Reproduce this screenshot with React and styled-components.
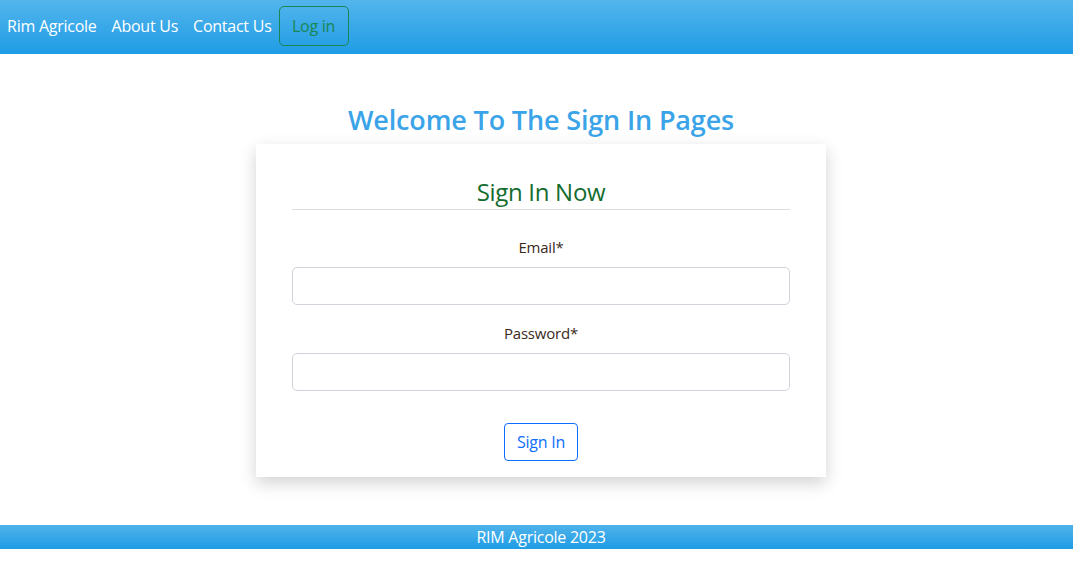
import React from "react";
import styled, { createGlobalStyle } from "styled-components";

const Global = createGlobalStyle`
  * { box-sizing: border-box; }
  body {
    margin: 0;
    font-family: "Open Sans", "Noto Sans", sans-serif;
    background: #fff;
    color: #212529;
  }
`;

const Page = styled.div`
  display: flex;
  flex-direction: column;
  min-height: 563px;
`;

const NavBar = styled.nav`
  height: 54px;
  display: flex;
  align-items: center;
  padding: 0 0 2px 7px;
  background: linear-gradient(180deg, #53b5ec 0%, #1f9ce5 100%);
`;

const NavLink = styled.a`
  color: #fff;
  font-size: 16px;
  text-decoration: none;
  margin-right: 15px;
  letter-spacing: -0.25px;
`;

const LoginButton = styled.button`
  height: 40px;
  width: 70px;
  padding: 0;
  margin-left: -8px;
  border: 1px solid #198754;
  border-radius: 5px;
  background: transparent;
  color: #198754;
  font-family: inherit;
  font-size: 16px;
  letter-spacing: -0.25px;
`;

const Main = styled.main`
  display: flex;
  flex-direction: column;
  align-items: center;
  padding: 45px 0 0 9px;
  height: 471px;
`;

const Title = styled.h1`
  margin: 0;
  font-size: 27px;
  font-weight: 600;
  color: #3ba4e8;
  line-height: 42px;
  letter-spacing: -0.15px;
`;

const Card = styled.div`
  margin-top: 3px;
  width: 570px;
  padding: 20px 36px 16px;
  background: #fff;
  box-shadow: 0 6px 16px rgba(0, 0, 0, 0.18);
  display: flex;
  flex-direction: column;
  align-items: stretch;
`;

const CardTitle = styled.h2`
  margin: 12px 0 0;
  font-size: 24px;
  font-weight: 400;
  color: #146c2e;
  text-align: center;
  line-height: 32px;
  letter-spacing: -0.3px;
  padding-bottom: 1px;
  border-bottom: 1px solid #dcdde2;
`;

const Field = styled.div`
  display: flex;
  flex-direction: column;
  align-items: stretch;
  margin-top: ${(p) => p.$top}px;
`;

const Label = styled.label`
  text-align: center;
  font-size: 15px;
  color: #3a2a1c;
  line-height: 22px;
  letter-spacing: -0.2px;
`;

const Input = styled.input`
  margin-top: 9px;
  height: 38px;
  border: 1px solid #ced4da;
  border-radius: 5px;
  padding: 6px 12px;
  font-size: 15px;
  font-family: inherit;
  outline: none;
`;

const Actions = styled.div`
  display: flex;
  justify-content: center;
  margin-top: 32px;
`;

const SignInButton = styled.button`
  width: 74px;
  height: 38px;
  padding: 0;
  border: 1px solid #0d6efd;
  border-radius: 4px;
  background: #fff;
  color: #0d6efd;
  font-family: inherit;
  font-size: 16px;
  letter-spacing: -0.25px;
`;

const Footer = styled.footer`
  height: 24px;
  display: flex;
  align-items: center;
  justify-content: center;
  padding-left: 9px;
  color: #fff;
  font-size: 16px;
  letter-spacing: -0.25px;
  background: linear-gradient(180deg, #4fb3ea 0%, #1f9ce5 100%);
`;

export default function App() {
  return (
    <Page>
      <Global />
      <NavBar>
        <NavLink href="#">Rim Agricole</NavLink>
        <NavLink href="#">About Us</NavLink>
        <NavLink href="#">Contact Us</NavLink>
        <LoginButton>Log in</LoginButton>
      </NavBar>
      <Main>
        <Title>Welcome To The Sign In Pages</Title>
        <Card>
          <CardTitle>Sign In Now</CardTitle>
          <Field $top={26}>
            <Label>Email*</Label>
            <Input type="email" />
          </Field>
          <Field $top={17}>
            <Label>Password*</Label>
            <Input type="password" />
          </Field>
          <Actions>
            <SignInButton>Sign In</SignInButton>
          </Actions>
        </Card>
      </Main>
      <Footer>RIM Agricole 2023</Footer>
    </Page>
  );
}
